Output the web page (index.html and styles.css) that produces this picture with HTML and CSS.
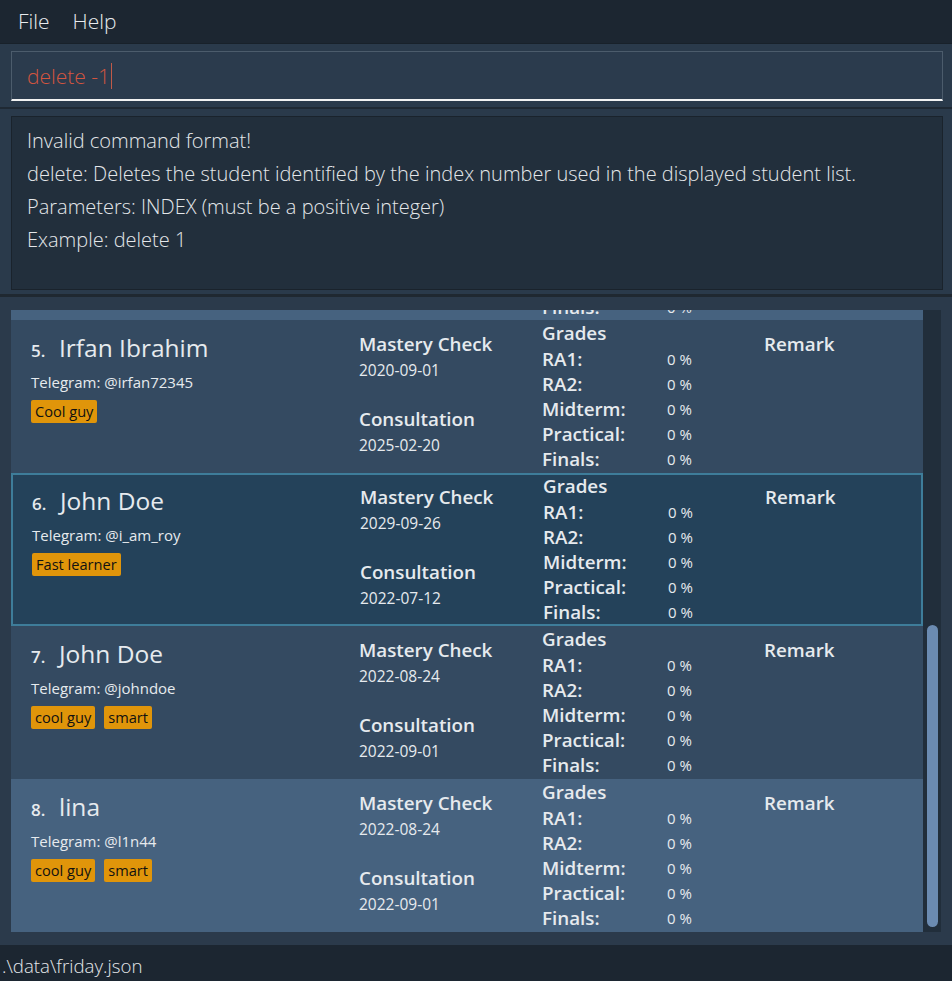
FILE: index.html
```html
<!DOCTYPE html>
<html>
<head>
<meta charset="utf-8">
<link rel="stylesheet" href="styles.css">
</head>
<body>
<div class="app">
  <div class="menubar">
    <span class="menu-item">File</span>
    <span class="menu-item">Help</span>
  </div>
  <div class="command-area">
    <div class="command-box"><span class="command-text">delete -1</span><span class="caret"></span></div>
  </div>
  <div class="result-area">
    <div class="result-box">
      <div class="result-line">Invalid command format!</div>
      <div class="result-line">delete: Deletes the student identified by the index number used in the displayed student list.</div>
      <div class="result-line">Parameters: INDEX (must be a positive integer)</div>
      <div class="result-line">Example: delete 1</div>
    </div>
  </div>
  <div class="list-panel">
    <div class="list-view">
      <div class="list-scroll">
        <div class="card card-light card-partial">
          <div class="col col-person"></div>
          <div class="col col-sessions"></div>
          <div class="col col-grades">
            <div class="grade grade-peek"><span class="glabel">Finals:</span><span class="gval">0 %</span></div>
          </div>
          <div class="col col-remark"></div>
        </div>

        <div class="card card-dark">
          <div class="col col-person">
            <div class="name-row"><span class="index">5.</span><span class="name">Irfan Ibrahim</span></div>
            <div class="telegram">Telegram: @irfan72345</div>
            <div class="tags"><span class="tag">Cool guy</span></div>
          </div>
          <div class="col col-sessions">
            <div class="label">Mastery Check</div><div class="date">2020-09-01</div>
            <div class="label label-gap">Consultation</div><div class="date">2025-02-20</div>
          </div>
          <div class="col col-grades">
            <div class="label">Grades</div>
            <div class="grade"><span class="glabel">RA1:</span><span class="gval">0 %</span></div>
            <div class="grade"><span class="glabel">RA2:</span><span class="gval">0 %</span></div>
            <div class="grade"><span class="glabel">Midterm:</span><span class="gval">0 %</span></div>
            <div class="grade"><span class="glabel">Practical:</span><span class="gval">0 %</span></div>
            <div class="grade"><span class="glabel">Finals:</span><span class="gval">0 %</span></div>
          </div>
          <div class="col col-remark"><div class="label">Remark</div></div>
        </div>

        <div class="card card-selected">
          <div class="col col-person">
            <div class="name-row"><span class="index">6.</span><span class="name">John Doe</span></div>
            <div class="telegram">Telegram: @i_am_roy</div>
            <div class="tags"><span class="tag">Fast learner</span></div>
          </div>
          <div class="col col-sessions">
            <div class="label">Mastery Check</div><div class="date">2029-09-26</div>
            <div class="label label-gap">Consultation</div><div class="date">2022-07-12</div>
          </div>
          <div class="col col-grades">
            <div class="label">Grades</div>
            <div class="grade"><span class="glabel">RA1:</span><span class="gval">0 %</span></div>
            <div class="grade"><span class="glabel">RA2:</span><span class="gval">0 %</span></div>
            <div class="grade"><span class="glabel">Midterm:</span><span class="gval">0 %</span></div>
            <div class="grade"><span class="glabel">Practical:</span><span class="gval">0 %</span></div>
            <div class="grade"><span class="glabel">Finals:</span><span class="gval">0 %</span></div>
          </div>
          <div class="col col-remark"><div class="label">Remark</div></div>
        </div>

        <div class="card card-dark">
          <div class="col col-person">
            <div class="name-row"><span class="index">7.</span><span class="name">John Doe</span></div>
            <div class="telegram">Telegram: @johndoe</div>
            <div class="tags"><span class="tag">cool guy</span><span class="tag">smart</span></div>
          </div>
          <div class="col col-sessions">
            <div class="label">Mastery Check</div><div class="date">2022-08-24</div>
            <div class="label label-gap">Consultation</div><div class="date">2022-09-01</div>
          </div>
          <div class="col col-grades">
            <div class="label">Grades</div>
            <div class="grade"><span class="glabel">RA1:</span><span class="gval">0 %</span></div>
            <div class="grade"><span class="glabel">RA2:</span><span class="gval">0 %</span></div>
            <div class="grade"><span class="glabel">Midterm:</span><span class="gval">0 %</span></div>
            <div class="grade"><span class="glabel">Practical:</span><span class="gval">0 %</span></div>
            <div class="grade"><span class="glabel">Finals:</span><span class="gval">0 %</span></div>
          </div>
          <div class="col col-remark"><div class="label">Remark</div></div>
        </div>

        <div class="card card-light">
          <div class="col col-person">
            <div class="name-row"><span class="index">8.</span><span class="name">lina</span></div>
            <div class="telegram">Telegram: @l1n44</div>
            <div class="tags"><span class="tag">cool guy</span><span class="tag">smart</span></div>
          </div>
          <div class="col col-sessions">
            <div class="label">Mastery Check</div><div class="date">2022-08-24</div>
            <div class="label label-gap">Consultation</div><div class="date">2022-09-01</div>
          </div>
          <div class="col col-grades">
            <div class="label">Grades</div>
            <div class="grade"><span class="glabel">RA1:</span><span class="gval">0 %</span></div>
            <div class="grade"><span class="glabel">RA2:</span><span class="gval">0 %</span></div>
            <div class="grade"><span class="glabel">Midterm:</span><span class="gval">0 %</span></div>
            <div class="grade"><span class="glabel">Practical:</span><span class="gval">0 %</span></div>
            <div class="grade"><span class="glabel">Finals:</span><span class="gval">0 %</span></div>
          </div>
          <div class="col col-remark"><div class="label">Remark</div></div>
        </div>
      </div>
      <div class="scrollbar"><div class="thumb"></div></div>
    </div>
  </div>
  <div class="statusbar">.\data\friday.json</div>
</div>
</body>
</html>
```

FILE: styles.css
```css
* { box-sizing: border-box; }
html, body { margin: 0; padding: 0; }
body {
  width: 952px;
  height: 981px;
  overflow: hidden;
  background: #2a3a4b;
  font-family: "Open Sans", "Noto Sans", sans-serif;
}
.app {
  display: flex;
  flex-direction: column;
  height: 981px;
}
.menubar {
  height: 44px;
  background: #1c2631;
  border-bottom: 1px solid #18212a;
  display: flex;
  align-items: center;
  padding-left: 18px;
  padding-bottom: 2px;
  gap: 23px;
}
.menu-item {
  color: #e8ebee;
  font-weight: 300;
  font-size: 21px;
  line-height: 26px;
}
.command-area {
  height: 65px;
  padding: 7px 9px 0 11px;
  border-bottom: 2px solid #1f2934;
}
.command-box {
  height: 50px;
  background: #2b3b4d;
  border: 1px solid #4c5c6c;
  border-bottom: 2px solid #f2f2f2;
  display: flex;
  align-items: center;
  padding-left: 15px;
}
.command-text {
  color: #d4553f;
  font-weight: 300;
  font-size: 21px;
  line-height: 26px;
}
.caret {
  width: 1px;
  height: 26px;
  background: #c05a48;
  margin-left: 1px;
}
.result-area {
  height: 188px;
  padding: 7px 9px 0 11px;
  border-bottom: 3px solid #1f2831;
}
.result-box {
  height: 174px;
  background: #222f3c;
  border: 1px solid #1a232c;
  padding: 7px 0 0 15px;
}
.result-line {
  color: #e4e7ea;
  font-weight: 300;
  font-size: 20px;
  line-height: 33px;
  white-space: nowrap;
}
.list-panel {
  flex: 1;
  padding: 13px 11px 13px 11px;
  background: #2b3a4b;
}
.list-view {
  display: flex;
  height: 622px;
  overflow: hidden;
}
.list-scroll {
  width: 912px;
  overflow: hidden;
}
.scrollbar {
  width: 18px;
  background: #212e3b;
  padding: 315px 3px 5px 4px;
}
.thumb {
  height: 302px;
  background: #6b8bb1;
  border-radius: 6px;
}
.card {
  height: 153px;
  display: grid;
  grid-template-columns: 328px 183px 222px 1fr;
  padding-left: 20px;
  color: #e6eaee;
}
.card-partial {
  height: 10px;
  overflow: hidden;
}
.card-partial .col-grades { padding-top: 0; }
.grade-peek { margin-top: -16px; }
.card-light { background: #46627f; }
.card-dark { background: #344a61; }
.card-selected {
  background: #24425a;
  box-shadow: inset 0 0 0 2px #3e7d9a;
  padding-left: 21px;
}
.col-person { padding-top: 12px; }
.name-row {
  display: flex;
  align-items: baseline;
  height: 32px;
  line-height: 32px;
}
.index {
  font-weight: 600;
  font-size: 17px;
  width: 28px;
}
.name {
  font-size: 24.5px;
  font-weight: 500;
}
.telegram {
  margin-top: 8px;
  font-size: 15px;
  line-height: 20px;
}
.tags {
  margin-top: 8px;
  display: flex;
  gap: 9px;
}
.tag {
  background: #e0950a;
  color: #111;
  font-size: 14.6px;
  line-height: 23px;
  height: 23px;
  padding: 0 4px;
  border-radius: 2px;
}
.col-sessions { padding-top: 12px; }
.label {
  font-weight: 600;
  font-size: 18.8px;
  line-height: 25px;
  white-space: nowrap;
}
.label-gap { margin-top: 24px; }
.date {
  font-size: 15.5px;
  line-height: 26px;
}
.col-grades { padding-top: 1px; }
.grade {
  display: flex;
  align-items: center;
  height: 25px;
}
.glabel {
  font-weight: 600;
  font-size: 18.8px;
  width: 125px;
}
.gval { font-size: 15px; }
.col-remark { padding-top: 12px; }
.statusbar {
  height: 36px;
  background: #1c2631;
  color: #e4e7ea;
  font-weight: 300;
  font-size: 18.7px;
  line-height: 32px;
  padding-top: 5px;
  padding-left: 2px;
}
```
